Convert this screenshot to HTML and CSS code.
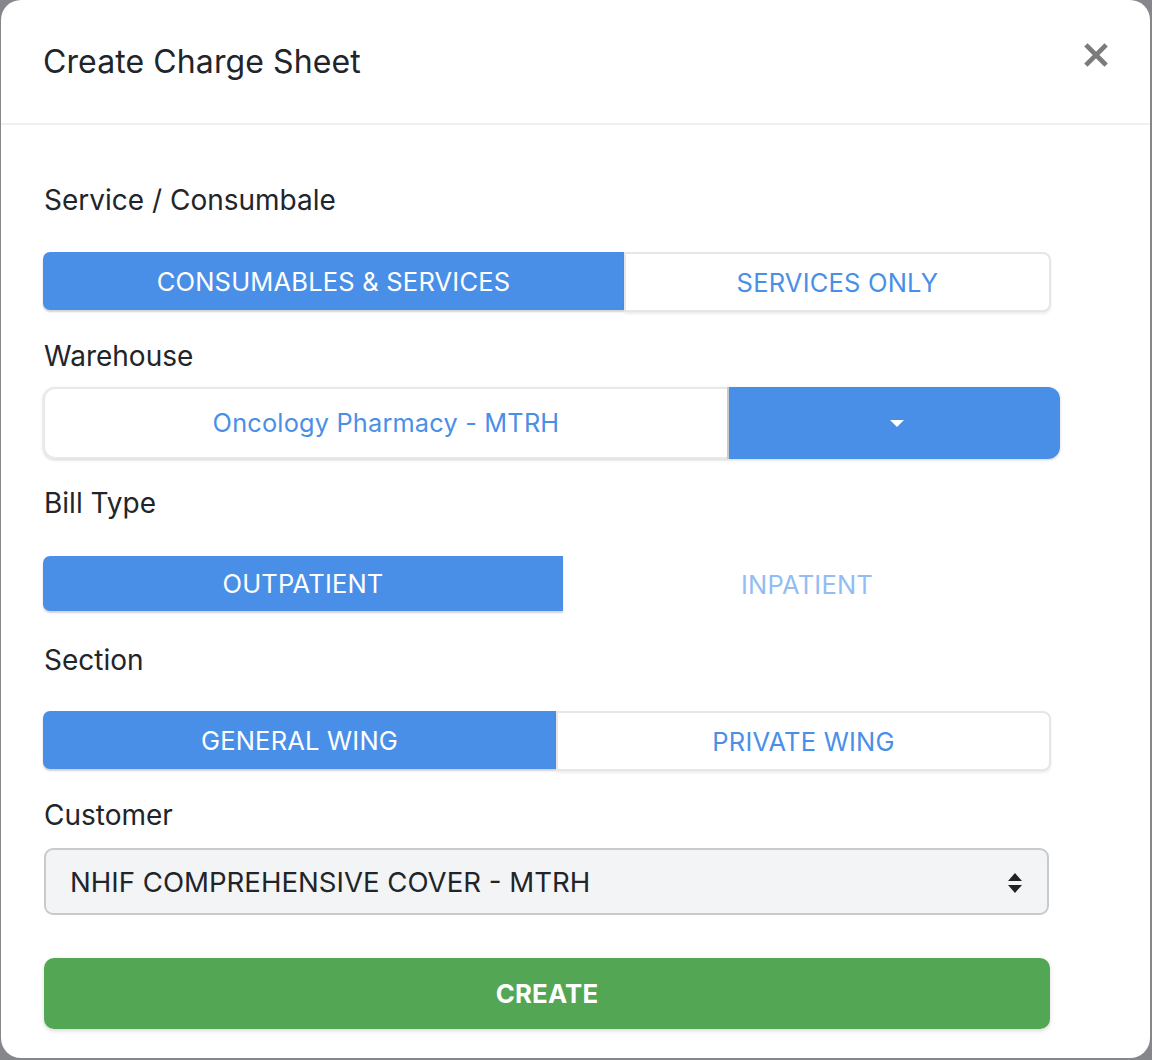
FILE: index.html
```html
<!DOCTYPE html>
<html lang="en">
<head>
<meta charset="utf-8">
<title>Create Charge Sheet</title>
<link rel="stylesheet" href="styles.css">
</head>
<body>
<div class="modal">
  <header class="modal-header">
    <h1 class="modal-title">Create Charge Sheet</h1>
    <button class="close" aria-label="Close">
      <svg width="24" height="24" viewBox="0 0 24 24"><path d="M3.5 3.5L20.5 20.5M20.5 3.5L3.5 20.5" stroke="#7b7b7b" stroke-width="4.6" stroke-linecap="square"/></svg>
    </button>
  </header>
  <div class="modal-body">
    <div class="label l1">Service / Consumbale</div>
    <div class="toggle t1">
      <button class="opt active">CONSUMABLES &amp; SERVICES</button>
      <button class="opt outline">SERVICES ONLY</button>
    </div>

    <div class="label l2">Warehouse</div>
    <div class="dropdown">
      <div class="dd-value">Oncology Pharmacy - MTRH</div>
      <div class="dd-btn"><span class="caret"></span></div>
    </div>

    <div class="label l3">Bill Type</div>
    <div class="toggle t2">
      <button class="opt active">OUTPATIENT</button>
      <button class="opt plain">INPATIENT</button>
    </div>

    <div class="label l4">Section</div>
    <div class="toggle t3">
      <button class="opt active">GENERAL WING</button>
      <button class="opt outline">PRIVATE WING</button>
    </div>

    <div class="label l5">Customer</div>
    <div class="select">
      <span>NHIF COMPREHENSIVE COVER - MTRH</span>
      <svg class="arrows" width="16" height="22" viewBox="0 0 16 22"><path d="M8 1L15 9H1Z M8 21L15 13H1Z" fill="#222"/></svg>
    </div>

    <button class="create">CREATE</button>
  </div>
</div>
</body>
</html>
```
FILE: styles.css
```css
* { box-sizing: border-box; }
html, body { margin: 0; padding: 0; }
body {
  width: 1152px;
  height: 1060px;
  background: #85878b;
  font-family: Inter, "Noto Sans", sans-serif;
  color: #212529;
  overflow: hidden;
}
.modal {
  width: 1149px;
  height: 1058px;
  margin-left: 1px;
  background: #fff;
  border-radius: 20px;
  display: flex;
  flex-direction: column;
}
.modal-header {
  height: 125px;
  border-bottom: 2px solid #f0f0f0;
  display: flex;
  align-items: center;
  justify-content: space-between;
  padding: 0 42px 0 42px;
}
.modal-title {
  margin: 0;
  font-size: 32px;
  line-height: 40px;
  font-weight: 400;
  letter-spacing: 0.1px;
}
.close {
  background: none;
  border: 0;
  padding: 0;
  margin-top: -14px;
  width: 24px;
  height: 24px;
  display: flex;
}
.modal-body {
  padding: 59px 0 0 42px;
  display: flex;
  flex-direction: column;
}
.label {
  font-size: 28px;
  line-height: 32px;
  font-weight: 400;
  letter-spacing: 0;
  margin-left: 1px;
}
.l1 { margin-bottom: 36px; }
.l2 { margin-top: 28px; margin-bottom: 15px; }
.l3 { margin-top: 28px; margin-bottom: 37px; }
.l4 { margin-top: 31px; margin-bottom: 35px; }
.l5 { margin-top: 28px; margin-bottom: 17px; }

.toggle {
  display: grid;
  width: 1007px;
}
.t1 { grid-template-columns: 581px 427px; height: 60px; }
.t2 { grid-template-columns: 520px 488px; height: 57px; }
.t3 { grid-template-columns: 513px 495px; height: 60px; }

.opt {
  font-family: Inter, "Noto Sans", sans-serif;
  font-size: 25.5px;
  font-weight: 400;
  letter-spacing: 0.2px;
  border: 0;
  padding: 0;
  background: #fff;
}
.opt.active {
  background: #4a8fe7;
  color: #fff;
  border-radius: 7px 0 0 7px;
  box-shadow: 0 2px 2px rgba(0,0,0,0.18);
  margin-bottom: 2px;
}
.opt.outline {
  color: #4a8fe7;
  border: 2px solid #e6e6e6;
  border-radius: 0 8px 8px 0;
  box-shadow: 0 2px 3px rgba(0,0,0,0.08);
}
.opt.plain {
  color: #93bdf2;
  background: transparent;
}

.dropdown {
  display: grid;
  grid-template-columns: 684px 333px;
  height: 72px;
  width: 1017px;
  border-radius: 12px;
  box-shadow: 0 1px 3px rgba(0,0,0,0.18);
}
.dd-value {
  display: flex;
  align-items: center;
  justify-content: center;
  color: #4a8fe7;
  font-size: 25.3px;
  letter-spacing: 0.2px;
  border: 2px solid #e8e8e8;
  border-right: 0;
  border-radius: 12px 0 0 12px;
  padding-bottom: 2px;
}
.dd-btn {
  background: #4a8fe7;
  border-radius: 0 12px 12px 0;
  border-left: 2px solid #c9c9c9;
  display: flex;
  align-items: center;
  justify-content: center;
}
.caret {
  width: 0;
  height: 0;
  border-left: 7px solid transparent;
  border-right: 7px solid transparent;
  border-top: 7px solid #fff;
  margin-left: 4px;
}

.select {
  width: 1005px;
  height: 67px;
  margin-left: 1px;
  background: #f3f4f6;
  border: 2px solid #c8cacd;
  border-radius: 9px;
  display: flex;
  align-items: center;
  justify-content: space-between;
  padding: 0 24px 0 24px;
  font-size: 27.6px;
  letter-spacing: 0;
}
.arrows { display: block; margin-top: 2px; }

.create {
  margin-top: 43px;
  margin-left: 1px;
  width: 1006px;
  height: 71px;
  background: #53a653;
  color: #fff;
  border: 0;
  border-radius: 10px;
  font-family: Inter, "Noto Sans", sans-serif;
  font-size: 25.8px;
  font-weight: 700;
  letter-spacing: 0.2px;
  box-shadow: 0 2px 4px rgba(0,0,0,0.15);
}
```
